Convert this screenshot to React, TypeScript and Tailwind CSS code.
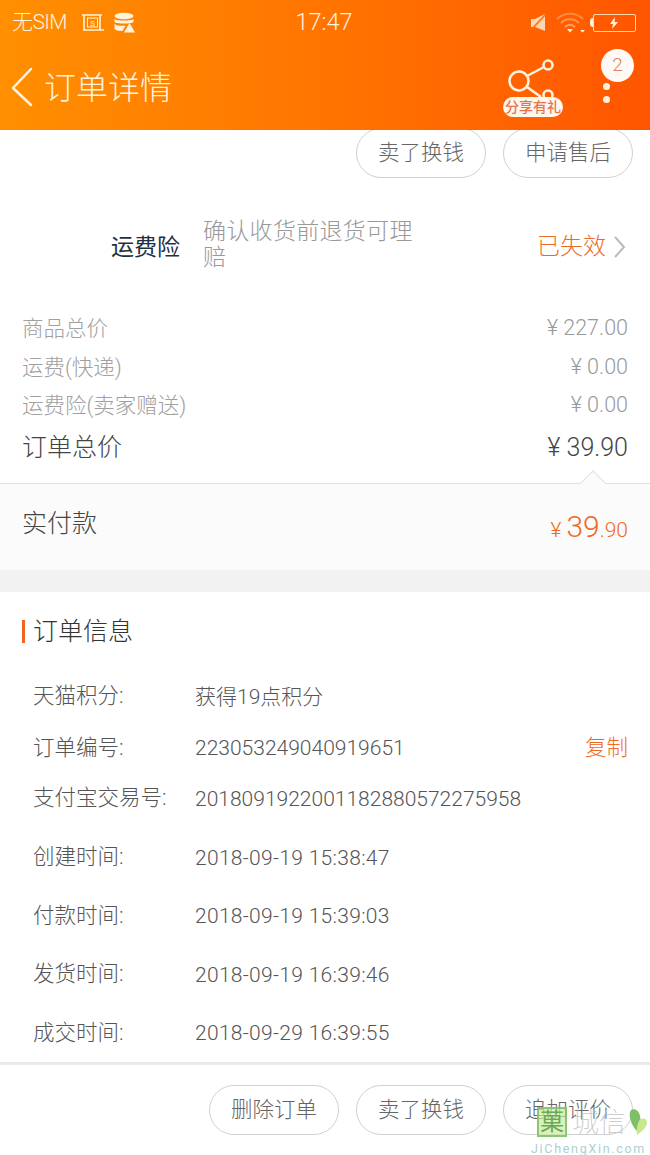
const FONT = "font-['Roboto','Noto_Sans_CJK_SC',sans-serif]"

const PRICES = [
  { label: '商品总价', value: '¥ 227.00', h: 'h-[39px]' },
  { label: '运费(快递)', value: '¥ 0.00', h: 'h-[38px]' },
  { label: '运费险(卖家赠送)', value: '¥ 0.00', h: 'h-[38px]' },
]

const INFO = [
  { label: '天猫积分:', value: '获得19点积分', h: 'h-[53px]' },
  { label: '订单编号:', value: '223053249040919651', h: 'h-[50px]', copy: true },
  { label: '支付宝交易号:', value: '2018091922001182880572275958', h: 'h-[51px]' },
  { label: '创建时间:', value: '2018-09-19 15:38:47', h: 'h-[67px]', date: true },
  { label: '付款时间:', value: '2018-09-19 15:39:03', h: 'h-[50px]', date: true },
  { label: '发货时间:', value: '2018-09-19 16:39:46', h: 'h-[67px]', date: true },
  { label: '成交时间:', value: '2018-09-29 16:39:55', h: 'h-[50px]', date: true },
]

function Pill({ text }: { text: string }) {
  return (
    <div className="w-[130px] h-[50px] rounded-full border border-[#d0d0d0] flex items-center justify-center text-[21.5px] font-light text-[#666]">
      {text}
    </div>
  )
}

function StatusBar() {
  return (
    <div className="h-[45px] flex items-center justify-between pl-[12px] pr-[14px] text-[#fff3df]">
      <div className="flex items-center w-[200px]">
        <span className="text-[21px] tracking-[-0.6px] font-light">无SIM</span>
        <svg width="24" height="20" viewBox="0 0 24 20" className="ml-[14px]" fill="none" stroke="currentColor" strokeWidth="1.6">
          <path d="M1 2h20M3 2v15h20M19 2v15" />
          <rect x="6.500" y="5" width="10" height="9" strokeWidth="1" />
          <text x="11.500" y="12.500" fontSize="8" textAnchor="middle" fill="currentColor" stroke="none">S</text>
        </svg>
        <svg width="21" height="22" viewBox="0 0 21 22" className="ml-[9px]" fill="currentColor">
          <ellipse cx="10" cy="4" rx="9.500" ry="3.200" />
          <path d="M.5 7c2 2 17 2 19 0v3c-2 2-17 2-19 0zM.5 12c2 2 9 2 11 1.600L8.500 19C4 19 1.500 18 .5 17z" />
          <path d="M15.500 11l5.500 9.500H10z" />
        </svg>
      </div>
      <span className="text-[23.5px] font-light mt-[1px]">17:47</span>
      <div className="flex items-center justify-end w-[200px]">
        <svg width="17" height="20" viewBox="0 0 17 20" fill="currentColor" className="mr-[9px]">
          <path d="M1 6h4l10-5v17L5 14H1z" opacity="0.8" />
          <path d="M0 18L16 1" stroke="#ff6a00" strokeWidth="1.500" />
        </svg>
        <svg width="34" height="22" viewBox="0 0 34 22" fill="none" stroke="currentColor">
          <path d="M1 7c7-7 19-7 26 0" opacity="0.3" strokeWidth="2" />
          <path d="M5 11c5-5 13-5 18 0" opacity="0.35" strokeWidth="2" />
          <path d="M9 15c3-3 7-3 10 0" opacity="0.45" strokeWidth="2" />
          <path d="M11 17h6l-3 3.500z" fill="currentColor" stroke="none" />
          <path d="M24 18h5l-2.500 2.500z" fill="currentColor" stroke="none" />
        </svg>
        <div className="w-[3px] h-[9px] bg-[#fff3df] rounded-l-sm" />
        <div className="w-[43px] h-[18px] border border-[#ffd9a8] rounded-[2px] flex items-center justify-center">
          <svg width="10" height="12" viewBox="0 0 10 12" fill="currentColor">
            <path d="M6 0L1 7h3l-1 5 6-7H5.500z" />
          </svg>
        </div>
      </div>
    </div>
  )
}

function NavBar() {
  return (
    <div className="h-[85px] flex items-start relative">
      <svg width="24" height="40" viewBox="0 0 24 40" fill="none" stroke="#fff3df" strokeWidth="2.500" strokeLinecap="round" strokeLinejoin="round" className="ml-[10px] mt-[22px]">
        <path d="M21 2L3 21l18 17" />
      </svg>
      <span className="ml-[10px] mt-[22px] text-[32px] leading-[42px] font-light text-[#fff3df]">订单详情</span>
      <div className="absolute left-[501px] top-[14px] w-[66px] h-[62px]">
        <svg width="66" height="50" viewBox="0 0 66 50" fill="none" stroke="#fff3df" strokeWidth="2.500">
          <circle cx="18" cy="22" r="9.500" />
          <circle cx="47" cy="6" r="4.500" />
          <circle cx="47" cy="36" r="4.500" />
          <path d="M26 17l17-9M26 28l14 10" />
        </svg>
        <div className="absolute left-[2px] top-[38px] w-[60px] h-[20px] rounded-full bg-[#fff6ee] text-[#e8744a] text-[14px] leading-[20px] font-medium text-center">
          分享有礼
        </div>
      </div>
      <div className="absolute left-[601px] top-[4px] w-[33px] flex flex-col">
        <div className="w-[33px] h-[33px] rounded-full bg-[#fffaf5] text-[#e0805a] text-[19px] font-light flex items-center justify-center">2</div>
        <div className="w-[7px] h-[7px] rounded-full bg-[#fff1e0] mt-[1px] ml-[2px]" />
        <div className="w-[7px] h-[7px] rounded-full bg-[#fff1e0] mt-[6px] ml-[2px]" />
      </div>
    </div>
  )
}

function Watermark() {
  return (
    <div className="absolute left-[531px] top-[1105px] w-[119px] h-[50px]">
      <div className="absolute left-[6px] top-[2px] w-[30px] h-[30px] bg-[#c8ec9a]/70 border-2 border-[#7cb86a]/80 text-[24px] leading-[26px] text-center text-[#6aa95c]">菓</div>
      <span className="absolute left-[41px] top-[1px] text-[27px] leading-[34px] font-thin text-[#c4c4c4]">城信</span>
      <svg width="20" height="28" viewBox="0 0 20 28" className="absolute left-[97px] top-[4px]">
        <path d="M3 1c4-2 8 1 9 6 1 5 0 10-2 16C5 19-1 7 3 1z" fill="#7fbf6a" />
        <path d="M11 12c2-4 9-3 8 3-1 4-6 8-10 11-1-5 0-10 2-14z" fill="#c8e88c" />
      </svg>
      <span className="absolute left-0 top-[37px] text-[12.500px] leading-[14px] tracking-[1.700px] text-[#a9d0cf]">JiChengXin.com</span>
    </div>
  )
}

export default function App() {
  return (
    <div className={`relative w-[650px] h-[1155px] overflow-hidden bg-white flex flex-col ${FONT}`}>
      <div className="relative z-10 h-[130px] shrink-0 bg-gradient-to-r from-[#ff8f00] to-[#ff5500]">
        <StatusBar />
        <NavBar />
      </div>

      <div className="flex justify-end gap-[17px] pr-[17px] -mt-[2px] h-[50px] shrink-0">
        <Pill text="卖了换钱" />
        <Pill text="申请售后" />
      </div>

      <div className="flex items-start h-[132px] pt-[41px] shrink-0">
        <span className="ml-[111px] mt-[12px] w-[92px] text-[23px] leading-[34px] text-[#1f2f42]">运费险</span>
        <p className="w-[216px] text-[23px] leading-[26px] font-light tracking-[0.3px] text-[#999]">确认收货前退货可理赔</p>
        <div className="ml-auto mr-[24px] flex items-center mt-[11px]">
          <span className="text-[23px] leading-[34px] font-light text-[#ee6a24]">已失效</span>
          <svg width="13" height="22" viewBox="0 0 13 22" fill="none" stroke="#bbb" strokeWidth="2" className="ml-[7px]">
            <path d="M2 1l9 10-9 10" />
          </svg>
        </div>
      </div>

      <div className="px-[22px] shrink-0">
        {PRICES.map((p) => (
          <div key={p.label} className={`flex items-center justify-between ${p.h} text-[21.500px] font-light text-[#a0a0a0]`}>
            <span>{p.label}</span>
            <span className="-mt-[2px] text-[#999]">{p.value}</span>
          </div>
        ))}
        <div className="flex items-center justify-between h-[46px] text-[25px] font-light text-[#444]">
          <span>订单总价</span>
          <span>¥ 39.90</span>
        </div>
      </div>

      <div className="relative h-[87px] shrink-0 border-t border-[#e2e2e2] bg-[#fbfbfb] flex items-center justify-between px-[22px] mt-[12px]">
        <div className="absolute right-[48px] -top-[10px] w-[18px] h-[18px] rotate-45 bg-[#fbfbfb] border-l border-t border-[#e2e2e2]" />
        <span className="text-[25px] font-light text-[#444] -mt-[6px]">实付款</span>
        <span className="text-[#ee6a24] font-light -mt-[2px]">
          <span className="text-[21px]">¥ </span>
          <span className="text-[30px]">39</span>
          <span className="text-[21px]">.90</span>
        </span>
      </div>

      <div className="h-[22px] shrink-0 bg-[#f2f2f2]" />

      <div className="flex items-center h-[79px] shrink-0 pl-[22px]">
        <div className="w-[3px] h-[23px] bg-[#f0641e]" />
        <span className="ml-[8px] text-[25px] font-light text-[#333]">订单信息</span>
      </div>

      <div className="pl-[33px] pr-[22px] shrink-0">
        {INFO.map((r) => (
          <div key={r.label} className={`flex items-center ${r.h} text-[21.500px] font-light text-[#555]`}>
            <span className="w-[162px] -mt-[2px]">{r.label}</span>
            <span className={r.date ? 'text-[21px] tracking-[0.3px]' : 'text-[21px]'}>{r.value}</span>
            {r.copy && <span className="ml-auto -mt-[2px] text-[#ee6a24]">复制</span>}
          </div>
        ))}
      </div>

      <div className="mt-auto h-[93px] shrink-0 border-t-[3px] border-[#eaeaea] flex justify-end gap-[17px] pr-[17px] pt-[20px]">
        <Pill text="删除订单" />
        <Pill text="卖了换钱" />
        <Pill text="追加评价" />
      </div>

      <Watermark />
    </div>
  )
}
